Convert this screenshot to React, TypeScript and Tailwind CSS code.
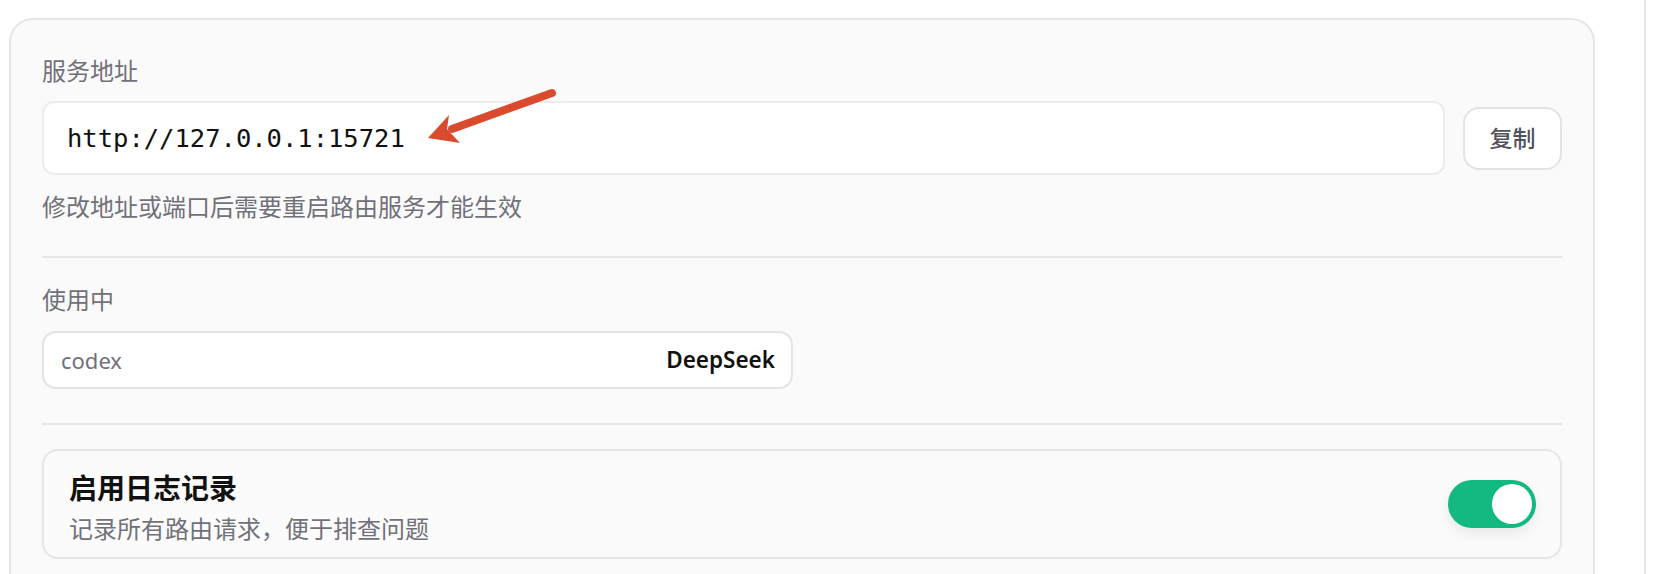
import React, { useState } from 'react';

// Route service settings panel: address, active provider, logging toggle
const App: React.FC = () => {
  const [logEnabled, setLogEnabled] = useState(true);
  const address = 'http://127.0.0.1:15721';

  return (
    <div className="relative flex h-[574px] overflow-hidden bg-white font-['Noto_Sans','Noto_Sans_CJK_SC',sans-serif]">
      <div className="w-[1644px] shrink-0 pl-[9px] pt-[18px]">
        <div className="w-[1586px] rounded-[24px] border-2 border-[#e6e6e6] bg-[#fafafa] px-[31px] pt-[35px] pb-[40px]">
          {/* Service address */}
          <p className="text-[24px] leading-[32px] text-[#71717a]">服务地址</p>
          <div className="mt-[14px] flex items-center gap-[18px]">
            <div className="flex h-[74px] flex-1 items-center rounded-[12px] border-2 border-[#ececec] bg-white pl-[23px]">
              <span className="font-['DejaVu_Sans_Mono',monospace] text-[25.5px] text-[#111111]">{address}</span>
            </div>
            <button className="h-[63px] w-[99px] rounded-[16px] border-2 border-[#e3e3e3] bg-white text-[23px] font-medium text-[#52525b]">
              复制
            </button>
          </div>
          <p className="mt-[16px] text-[24px] leading-[32px] text-[#71717a]">修改地址或端口后需要重启路由服务才能生效</p>

          <div className="mt-[33px] h-[2px] bg-[#e6e6e6]" />

          {/* Active provider */}
          <p className="mt-[26px] text-[24px] leading-[32px] text-[#71717a]">使用中</p>
          <div className="mt-[15px] flex h-[58px] w-[751px] items-center justify-between rounded-[14px] border-2 border-[#e3e3e3] bg-white pl-[17px] pr-[16px]">
            <span className="text-[22px] text-[#71717a]">codex</span>
            <span className="text-[22.5px] font-semibold text-[#111111]">DeepSeek</span>
          </div>

          <div className="mt-[34px] h-[2px] bg-[#e6e6e6]" />

          {/* Logging toggle */}
          <div className="mt-[24px] flex items-center justify-between rounded-[16px] border-2 border-[#e6e6e6] bg-[#fbfbfb] pl-[25px] pr-[24px]">
            <div className="pt-[19px] pb-[12px]">
              <p className="text-[28px] font-semibold leading-[36px] text-[#111111]">启用日志记录</p>
              <p className="mt-[7px] text-[24px] leading-[32px] text-[#71717a]">记录所有路由请求，便于排查问题</p>
            </div>
            <button
              onClick={() => setLogEnabled((v) => !v)}
              className={`flex h-[48px] w-[88px] items-center rounded-full px-[4px] shadow-[0_6px_14px_rgba(0,0,0,0.08)] ${
                logEnabled ? 'justify-end bg-[#12b981]' : 'justify-start bg-[#d4d4d8]'
              }`}
            >
              <span className="h-[40px] w-[40px] rounded-full bg-white" />
            </button>
          </div>
        </div>
      </div>
      <div className="w-[2px] shrink-0 bg-[#e6e6e6]" />
      <div className="flex-1" />

      {/* Annotation arrow pointing at the address */}
      <svg className="pointer-events-none absolute left-[420px] top-[84px]" width="140" height="66" viewBox="420 84 140 66">
        <line x1="552" y1="93" x2="452" y2="129" stroke="#da4a2c" strokeWidth="8" strokeLinecap="round" />
        <polygon points="428,138 449,115 447,129 460,143" fill="#da4a2c" />
      </svg>
    </div>
  );
};

export default App;
